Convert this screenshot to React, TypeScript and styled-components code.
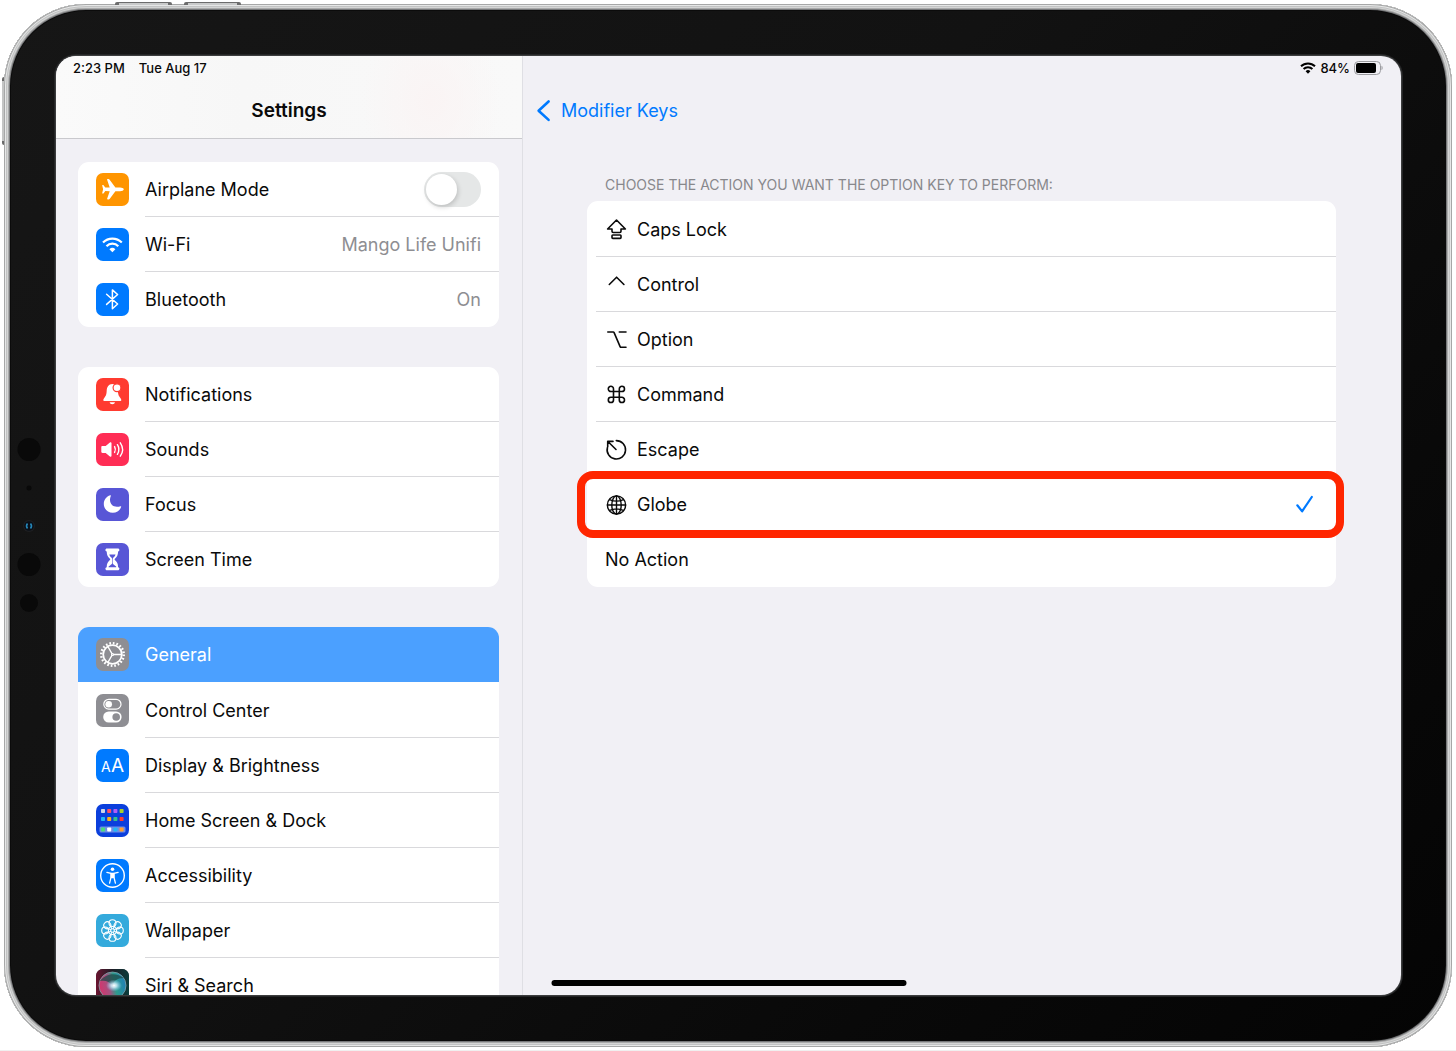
import React, { useState } from "react";
import styled, { createGlobalStyle, css } from "styled-components";

const color = {
  blue: "#007aff",
  label: "#0a0a0a",
  secondary: "#8e8e92",
  separator: "#d9d9dc",
  grouped: "#f1f0f5",
  card: "#ffffff",
  selected: "#4ba0ff",
  callout: "#ff2600",
};

const GlobalStyle = createGlobalStyle`
  *, *::before, *::after { box-sizing: border-box; }
  body {
    margin: 0;
    background: #fff;
    color: ${color.label};
    font-family: Inter, "Liberation Sans", sans-serif;
    font-size: 18px;
    line-height: 24px;
    overflow: hidden;
  }
`;

/* ---------- Device ---------- */

const Stage = styled.div`
  height: 100vh;
  min-height: 480px;
  padding: 4px;
  display: flex;
  border-bottom: 1px solid #f0f0f0;
`;

const Device = styled.div`
  position: relative;
  flex: 1;
  display: flex;
  margin-bottom: -1px;
  padding: 52px 51px 52px 52px;
  border-radius: 82px;
  background: linear-gradient(135deg, #161616 0%, #121212 40%, #090909 75%, #040404 100%);
  box-shadow:
    inset 0 0 0 1px #a6a7a7,
    inset 0 0 0 2px #e6e7e7,
    inset 0 0 0 3px #c2c3c3,
    inset 0 0 0 4px #d3d4d4,
    inset 0 0 0 5px #a9aaaa,
    inset 0 0 0 6px #77787a,
    inset 0 0 0 7px #0b0b0b;
`;

const TopButton = styled.span<{ $left: number }>`
  position: absolute;
  top: -2px;
  left: ${(p) => p.$left}px;
  width: 57px;
  height: 3px;
  border: solid #6c6c6c;
  border-width: 1px 4px 0;
  border-radius: 2px 2px 0 0;
  background: #c9caca;
`;

const SideButton = styled.span`
  position: absolute;
  left: -2px;
  top: 73px;
  width: 2px;
  height: 68px;
  border: solid #6a6a6a;
  border-width: 4px 0;
  border-radius: 2px 0 0 2px;
  background: #c4c5c5;
`;

const Sensors = styled.svg`
  position: absolute;
  left: 12px;
  top: 50%;
  width: 26px;
  height: 180px;
  transform: translateY(-50%);
`;

const Screen = styled.div`
  position: relative;
  flex: 1;
  min-width: 0;
  display: flex;
  overflow: hidden;
  border-radius: 20px;
  background: ${color.grouped};
  box-shadow: 0 0 0 1px #3c3d3e, 0 0 0 2px #242526;
`;

const HomeIndicator = styled.span`
  position: absolute;
  left: 50%;
  bottom: 9px;
  width: 355px;
  height: 6px;
  border-radius: 3px;
  background: #000;
  transform: translateX(-50%);
`;

/* ---------- Bars ---------- */

const StatusBar = styled.div<{ $end?: boolean }>`
  display: flex;
  align-items: center;
  justify-content: ${(p) => (p.$end ? "flex-end" : "flex-start")};
  gap: ${(p) => (p.$end ? 4 : 14)}px;
  height: 24px;
  padding: 0 18px 0 17px;
  font-size: 13px;
  line-height: 16px;
  font-weight: 500;
`;

const NavBar = styled.div<{ $center?: boolean }>`
  display: flex;
  align-items: center;
  justify-content: ${(p) => (p.$center ? "center" : "flex-start")};
  height: 59px;
  padding: 2px 13px 0;
`;

const Title = styled.h1`
  margin: 0;
  font-size: 19px;
  line-height: 24px;
  font-weight: 600;
`;

const BackLink = styled.a`
  display: flex;
  align-items: center;
  gap: 10px;
  color: ${color.blue};
  text-decoration: none;
`;

/* ---------- Columns ---------- */

const Sidebar = styled.nav`
  flex: 0 0 467px;
  display: flex;
  flex-direction: column;
  min-height: 0;
  border-right: 1px solid #dfdfe4;
`;

const SidebarHeader = styled.header`
  flex: none;
  height: 83px;
  border-bottom: 1px solid #c9c9cd;
  background:
    radial-gradient(ellipse 70px 90px at 375px 45px, #faf4f4 0, rgba(250, 244, 244, 0) 100%),
    linear-gradient(90deg, #fafafa, #f7f7f7 40%, #f9f9f9);
`;

const SidebarScroll = styled.div`
  flex: 1;
  min-height: 0;
  display: flex;
  flex-direction: column;
  gap: 40px;
  padding: 23px 23px 0 22px;
  overflow-y: auto;
  scrollbar-width: none;
`;

const Detail = styled.main`
  flex: 1;
  min-width: 0;
  display: flex;
  flex-direction: column;
`;

const DetailBody = styled.form`
  padding: 36px 65px 0 64px;
`;

/* ---------- Sidebar rows ---------- */

const Group = styled.ul`
  flex: none;
  margin: 0;
  padding: 0;
  list-style: none;
  border-radius: 11px;
  overflow: hidden;
  background: ${color.card};
`;

const rowStyle = css`
  display: flex;
  align-items: center;
  gap: 16px;
  height: 55px;
  padding-left: 18px;
  color: inherit;
  text-decoration: none;
`;

const RowLink = styled.a<{ $selected?: boolean }>`
  ${rowStyle}
  ${(p) => p.$selected && `margin-bottom: 1px; background: ${color.selected}; color: #fff;`}
`;

const RowLabel = styled.label`
  ${rowStyle}
`;

const RowContent = styled.span<{ $line: boolean }>`
  flex: 1;
  display: flex;
  align-items: center;
  justify-content: space-between;
  height: 55px;
  padding-right: 18px;
  border-bottom: 1px solid ${(p) => (p.$line ? color.separator : "transparent")};
`;

const RowName = styled.span`
  padding-top: 2px;
`;

const Value = styled.span`
  padding-top: 2px;
  color: ${color.secondary};
`;

const Tile = styled.svg`
  flex: none;
  width: 33px;
  height: 33px;
  border-radius: 7px;
`;

const Switch = styled.input`
  appearance: none;
  position: relative;
  margin: 0;
  width: 57px;
  height: 35px;
  border-radius: 18px;
  background: #e5e7e7;
  &:checked { background: #34c759; }
  &::before {
    content: "";
    position: absolute;
    top: 2px;
    left: 2px;
    width: 31px;
    height: 31px;
    border-radius: 50%;
    background: #fff;
    box-shadow: 1px 2px 5px rgba(0, 0, 0, 0.18);
  }
  &:checked::before { left: 24px; }
`;

/* ---------- Option list ---------- */

const Options = styled.fieldset`
  margin: 0;
  padding: 0;
  border: 0;
  min-width: 0;
`;

const Legend = styled.legend`
  padding: 0 0 6px 18px;
  color: #88888c;
  font-size: 14px;
  line-height: 20px;
`;

const OptionCard = styled.div`
  padding-top: 1px;
  border-radius: 11px;
  background: ${color.card};
`;

const OptionRow = styled.label<{ $highlight: boolean }>`
  position: relative;
  display: flex;
  height: 55px;
  padding-left: 9px;
  ${(p) =>
    p.$highlight &&
    css`
      &::after {
        content: "";
        position: absolute;
        inset: -6px -8px -6px -10px;
        border: 8px solid ${color.callout};
        border-radius: 16px;
      }
    `}
`;

const OptionContent = styled.span<{ $line: boolean }>`
  flex: 1;
  display: flex;
  align-items: center;
  gap: 9px;
  padding: 0 22px 0 9px;
  border-bottom: 1px solid ${(p) => (p.$line ? color.separator : "transparent")};
`;

const OptionName = styled.span`
  flex: 1;
  padding-top: 2px;
`;

const HiddenRadio = styled.input`
  position: absolute;
  opacity: 0;
  width: 1px;
  height: 1px;
  margin: 0;
`;

const Glyph = styled.svg`
  flex: none;
  width: 23px;
  height: 23px;
  fill: none;
  stroke: #0a0a0a;
  stroke-width: 1.6;
  stroke-linecap: round;
  stroke-linejoin: round;
`;

/* ---------- Tile icons ---------- */

const tiles: Record<string, { bg: string; art: React.ReactNode }> = {
  airplane: {
    bg: "#ff9500",
    art: (
      <path
        fill="#fff"
        d="M27.8 16.3c0-1.2-2-1.9-3.7-1.9h-4.7L13.8 6.9c-.4-.6-.8-.8-1.3-.8h-.8c-.5 0-.7.4-.5.9l2.5 7.4-4.4.2-1.6-2.2c-.2-.3-.4-.4-.7-.4h-.4c-.4 0-.5.3-.4.6l.9 3.7-.9 3.7c-.1.3 0 .6.4.6H7c.3 0 .5-.1.7-.4l1.6-2.2 4.4.2-2.5 7.4c-.2.5 0 .9.5.9h.8c.5 0 .9-.2 1.3-.8l5.6-7.5h4.7c1.7 0 3.7-.7 3.7-1.9z"
      />
    ),
  },
  wifi: {
    bg: color.blue,
    art: (
      <g fill="none" stroke="#fff" strokeWidth="2.2">
        <path d="M7 14.6a13.2 13.2 0 0 1 18.8 0" />
        <path d="M10.5 18.2a8.2 8.2 0 0 1 11.8 0" />
        <path d="M13.4 21.2a4.3 4.3 0 0 1 6 0l-3 3z" fill="#fff" stroke="none" />
      </g>
    ),
  },
  bluetooth: {
    bg: color.blue,
    art: (
      <path
        d="M10.6 11.2 21.6 21l-5.2 4.7V6.9l5.2 4.6-11 9.9"
        fill="none"
        stroke="#fff"
        strokeWidth="1.5"
        strokeLinejoin="round"
        strokeLinecap="round"
      />
    ),
  },
  bell: {
    bg: "#ff3b30",
    art: (
      <>
        <path
          fill="#fff"
          d="M16.3 6c-3.7 0-5.4 3-5.6 6.6-.2 4.2-.8 5.3-2.3 7.2-.7.8-1.1 1.5-1.1 2.1 0 .7.5 1.1 1.3 1.1h15.400c.8 0 1.3-.4 1.3-1.1 0-.6-.4-1.3-1.1-2.1-1.5-1.9-2.1-3-2.3-7.2C21.7 9 20 6 16.300 6z"
        />
        <path fill="#fff" d="M13.6 24.2h5.4c-.3 1.2-1.3 2-2.7 2s-2.4-.8-2.7-2z" />
        <circle cx="21" cy="9.7" r="3.9" fill="#fff" stroke="#ff3b30" strokeWidth="1.2" />
      </>
    ),
  },
  sounds: {
    bg: "#ff2d55",
    art: (
      <>
        <path
          fill="#fff"
          d="M6.5 13h3.2l4.2-3.5c.8-.6 1.6-.3 1.6.7v12.6c0 1-.8 1.3-1.6.7L9.700 20H6.500c-.8 0-1.2-.5-1.2-1.2v-4.600c0-.7.4-1.2 1.2-1.2z"
        />
        <g fill="none" stroke="#fff" strokeWidth="1.4" strokeLinecap="round">
          <path d="M18.6 13.6c1 1.8 1 4 0 5.8" />
          <path d="M21.4 11.7c1.9 3 1.900 6.600 0 9.600" />
          <path d="M24.3 9.8c2.9 4.2 2.9 9.200 0 13.400" />
        </g>
      </>
    ),
  },
  moon: {
    bg: "#5856d6",
    art: (
      <path
        fill="#fff"
        d="M14.2 7.3c.4-.2.8.1.6.6-.6 1.3-.8 2.5-.8 3.9 0 4.2 2.7 7 7 7 1.3 0 2.5-.2 3.5-.6.5-.2.8.1.7.6-1.1 3.5-4.4 6-8.4 6-5 0-9-3.9-9-8.900 0-3.900 2.600-7.300 6.400-8.600z"
      />
    ),
  },
  hourglass: {
    bg: "#5856d6",
    art: (
      <>
        <path
          fill="#fff"
          d="M11 5.600h10.800c1 0 1.600.6 1.600 1.500 0 .8-.5 1.300-1.300 1.500-.1 3.500-1 5.300-3.200 7.200-.5.4-.5.900 0 1.300 2.200 1.900 3.100 3.700 3.200 7.200.8.200 1.300.7 1.300 1.500 0 .900-.6 1.500-1.600 1.500H11c-1 0-1.600-.6-1.600-1.500 0-.8.500-1.300 1.300-1.500.1-3.500 1-5.300 3.200-7.200.5-.4.500-.9 0-1.300-2.200-1.900-3.100-3.700-3.200-7.200-.8-.2-1.300-.7-1.300-1.500 0-.9.600-1.500 1.600-1.500z"
        />
        <path
          fill="#5856d6"
          d="M13.300 11.400h6.200c-.4 1.400-1.100 2.300-2.100 3.100-.5.4-.7.900-.7 1.500v4c0 .6.200.9.600 1.200l2.800 2.300c.3.300.2.700-.2.700h-7c-.4 0-.5-.4-.2-.7l2.800-2.300c.4-.3.600-.6.600-1.200v-4c0-.6-.2-1.100-.7-1.500-1-.8-1.700-1.700-2.100-3.100z"
        />
      </>
    ),
  },
  gear: {
    bg: "#8e8e93",
    art: (
      <g fill="none" stroke="#fff">
        <circle cx="16.5" cy="16.5" r="11.3" strokeWidth="2.400" strokeDasharray="1.700 1.850" />
        <circle cx="16.5" cy="16.5" r="9.300" strokeWidth="1.800" />
        <path strokeWidth="1.300" d="M17.300 16.500h8.200M16.100 15.800l-4.200-7.200M16.100 17.200l-4.200 7.200" />
        <circle cx="16.5" cy="16.5" r="1" strokeWidth="1.200" />
      </g>
    ),
  },
  toggles: {
    bg: "#8e8e93",
    art: (
      <>
        <rect x="7.8" y="5.3" width="17.2" height="9.8" rx="4.9" fill="none" stroke="#fff" strokeWidth="1.2" />
        <circle cx="12.7" cy="10.2" r="3.3" fill="#fff" />
        <rect x="7.2" y="17.5" width="18.4" height="11" rx="5.5" fill="#fff" />
        <circle cx="20.2" cy="23" r="3.8" fill="#8e8e93" />
      </>
    ),
  },
  text: {
    bg: color.blue,
    art: (
      <g fill="#fff" fontFamily="Inter, sans-serif">
        <text x="5" y="23" fontSize="14">A</text>
        <text x="15" y="23" fontSize="19">A</text>
      </g>
    ),
  },
  home: {
    bg: "#0b3fdc",
    art: (
      <>
        <rect x="3.5" y="22.5" width="26" height="6" rx="1.5" fill="#6f8de8" />
        {[
          ["#cfd6e6", "#ff4f64", "#b35cf5", "#a8d12b"],
          ["#22b8f5", "#ffb017", "#34c28a", "#ff3b30"],
          ["#4cd980", "#ffffff", "#22b8f5", "#ff9f2e"],
        ].map((row, r) =>
          row.map((fill, c) => (
            <rect key={`${r}-${c}`} x={5 + c * 6.2} y={[5, 13, 23.5][r]} width="4" height="4" rx="0.8" fill={fill} />
          )),
        )}
      </>
    ),
  },
  accessibility: {
    bg: color.blue,
    art: (
      <>
        <circle cx="16.5" cy="16.5" r="11.8" fill="none" stroke="#fff" strokeWidth="1.4" />
        <circle cx="16.5" cy="10.2" r="1.8" fill="#fff" />
        <path
          d="M10.900 13.400 15 14.300v4L13.600 24.200M22.100 13.400 18 14.300v4L19.400 24.200"
          fill="none"
          stroke="#fff"
          strokeWidth="1.3"
          strokeLinecap="round"
          strokeLinejoin="round"
        />
        <path d="M14.600 13.700h3.800v4.600l-.8 1h-2.200l-.8-1z" fill="#fff" />
      </>
    ),
  },
  wallpaper: {
    bg: "#34aadc",
    art: (
      <g fill="none" stroke="#fff" strokeWidth="1.1">
        {[0, 45, 90, 135, 180, 225, 270, 315].map((a) => (
          <ellipse key={a} cx="16.5" cy="9.100" rx="3.500" ry="3.400" transform={`rotate(${a} 16.5 16.5)`} />
        ))}
        {[22.5, 67.5, 112.5, 157.5, 202.5, 247.5, 292.5, 337.5].map((a) => (
          <path key={a} d="M16.5 14.700v-3.200" transform={`rotate(${a} 16.5 16.5)`} />
        ))}
        <circle cx="16.5" cy="16.5" r="1.800" />
      </g>
    ),
  },
  siri: {
    bg: "#1c1524",
    art: (
      <>
        <defs>
          <linearGradient id="siriBack" x1="0" x2="1">
            <stop offset="0" stopColor="#6b1531" />
            <stop offset="0.5" stopColor="#1d1d26" />
            <stop offset="1" stopColor="#0c3d3c" />
          </linearGradient>
          <linearGradient id="siriOrb" x1="0" y1="0.6" x2="1" y2="0.4">
            <stop offset="0" stopColor="#d6336c" />
            <stop offset="0.35" stopColor="#a8507f" />
            <stop offset="0.6" stopColor="#2d9c8c" />
            <stop offset="1" stopColor="#1f7fb8" />
          </linearGradient>
          <radialGradient id="siriGlow">
            <stop offset="0" stopColor="#fff" />
            <stop offset="0.35" stopColor="#d9f1ff" stopOpacity="0.8" />
            <stop offset="1" stopColor="#8fd0ff" stopOpacity="0" />
          </radialGradient>
        </defs>
        <rect width="33" height="33" fill="url(#siriBack)" />
        <circle cx="16.5" cy="16.5" r="13.5" fill="url(#siriOrb)" stroke="#7fa3a8" strokeWidth="0.8" />
        <path d="M4 12C10 4 20 3 28 9 21 9 17 12 17 17 13 12 9 11 4 12z" fill="#1d4a48" opacity="0.75" />
        <ellipse cx="18" cy="16.5" rx="8" ry="6" fill="url(#siriGlow)" />
      </>
    ),
  },
};

function TileIcon({ name }: { name: string }) {
  const { bg, art } = tiles[name];
  return (
    <Tile viewBox="0 0 33 33" aria-hidden="true">
      <rect width="33" height="33" fill={bg} />
      {art}
    </Tile>
  );
}

/* ---------- Key glyphs ---------- */

const glyphs: Record<string, React.ReactNode> = {
  caps: (
    <>
      <path d="M11.500 2 2.600 11h4.400v2.300c0 .8.400 1.200 1.200 1.200h6.600c.8 0 1.200-.4 1.200-1.200V11h4.400z" />
      <rect x="7" y="17" width="9" height="3.400" rx="0.8" />
    </>
  ),
  control: <path d="m4.300 11.500 7.300-7.300 7.300 7.300" />,
  option: <path d="M2.800 4h5.400c.5 0 .7.200.9.600l6 14c.2.500.5.700 1 .7h4.900M14.300 4H21" />,
  command: (
    <path d="M8.500 8.500h5.800v5.800H8.500zM8.500 8.500H6a2.600 2.600 0 1 1 2.500-2.600zM14.300 8.500V5.900a2.600 2.600 0 1 1 2.600 2.600zM14.300 14.300h2.600a2.600 2.600 0 1 1-2.600 2.600zM8.500 14.300v2.600a2.600 2.600 0 1 1-2.600-2.600z" />
  ),
  escape: (
    <>
      <path d="M11.300 2.600a9.200 9.200 0 1 1-8.900 7" />
      <path d="M11 11.500 3.400 4M2.700 8.700V3.400H8" />
    </>
  ),
  globe: (
    <g strokeWidth="1.4">
      <circle cx="11.5" cy="12" r="9.1" />
      <ellipse cx="11.5" cy="12" rx="4.7" ry="9.1" />
      <path d="M11.500 2.900v18.200M2.400 12h18.200M4.600 6.600c4.400 2 9.400 2 13.800 0M4.600 17.400c4.400-2 9.400-2 13.800 0" />
    </g>
  ),
};

/* ---------- Data ---------- */

type Item = { label: string; icon: string; value?: string; toggle?: boolean };

const groups: Item[][] = [
  [
    { label: "Airplane Mode", icon: "airplane", toggle: true },
    { label: "Wi-Fi", icon: "wifi", value: "Mango Life Unifi" },
    { label: "Bluetooth", icon: "bluetooth", value: "On" },
  ],
  [
    { label: "Notifications", icon: "bell" },
    { label: "Sounds", icon: "sounds" },
    { label: "Focus", icon: "moon" },
    { label: "Screen Time", icon: "hourglass" },
  ],
  [
    { label: "General", icon: "gear" },
    { label: "Control Center", icon: "toggles" },
    { label: "Display & Brightness", icon: "text" },
    { label: "Home Screen & Dock", icon: "home" },
    { label: "Accessibility", icon: "accessibility" },
    { label: "Wallpaper", icon: "wallpaper" },
    { label: "Siri & Search", icon: "siri" },
  ],
];

const actions = [
  { label: "Caps Lock", glyph: "caps" },
  { label: "Control", glyph: "control" },
  { label: "Option", glyph: "option" },
  { label: "Command", glyph: "command" },
  { label: "Escape", glyph: "escape" },
  { label: "Globe", glyph: "globe" },
  { label: "No Action" },
];

function SettingsRow({ item, last }: { item: Item; last: boolean }) {
  const selected = item.label === "General";
  if (item.toggle) {
    return (
      <li>
        <RowLabel>
          <TileIcon name={item.icon} />
          <RowContent $line={!last}>
            <RowName>{item.label}</RowName>
            <Switch type="checkbox" role="switch" />
          </RowContent>
        </RowLabel>
      </li>
    );
  }
  return (
    <li>
      <RowLink href="#" $selected={selected} aria-current={selected ? "page" : undefined}>
        <TileIcon name={item.icon} />
        <RowContent $line={!last && !selected}>
          <RowName>{item.label}</RowName>
          {item.value && <Value>{item.value}</Value>}
        </RowContent>
      </RowLink>
    </li>
  );
}

export default function App() {
  const [action, setAction] = useState("Globe");

  return (
    <>
      <GlobalStyle />
      <Stage>
        <Device>
          <TopButton $left={111} />
          <TopButton $left={180} />
          <SideButton />
          <Sensors viewBox="0 0 26 180" aria-hidden="true">
            <circle cx="13" cy="13.5" r="11.5" fill="#090909" />
            <circle cx="13" cy="52" r="2.5" fill="#090909" />
            <circle cx="13" cy="90" r="6" fill="#1e1f21" />
            <circle cx="13" cy="90" r="4.8" fill="#0a0f18" />
            <path d="M11.5 87.5q-2 2.500 0 5M14.500 87.500q2 2.500 0 5" fill="none" stroke="#2687b8" strokeWidth="1.6" />
            <circle cx="13" cy="128.5" r="11.5" fill="#090909" />
            <circle cx="13" cy="167" r="9" fill="#090909" />
          </Sensors>

          <Screen>
            <Sidebar aria-label="Settings">
              <SidebarHeader>
                <StatusBar>
                  <span>2:23 PM</span>
                  <span>Tue Aug 17</span>
                </StatusBar>
                <NavBar $center>
                  <Title>Settings</Title>
                </NavBar>
              </SidebarHeader>
              <SidebarScroll>
                {groups.map((items, g) => (
                  <Group key={g}>
                    {items.map((item, i) => (
                      <SettingsRow key={item.label} item={item} last={i === items.length - 1} />
                    ))}
                  </Group>
                ))}
              </SidebarScroll>
            </Sidebar>

            <Detail>
              <header>
                <StatusBar $end>
                  <svg width="16" height="12" viewBox="0 0 16 12" aria-hidden="true">
                    <g fill="none" stroke="#000" strokeWidth="2">
                      <path d="M1 4.300a10 10 0 0 1 14 0" />
                      <path d="M3.600 7a6.200 6.200 0 0 1 8.800 0" />
                    </g>
                    <path d="M5.600 9.200a3.500 3.500 0 0 1 4.800 0L8 11.700z" fill="#000" />
                  </svg>
                  <span>84%</span>
                  <svg width="29" height="14" viewBox="0 0 29 14" aria-hidden="true">
                    <rect x="0.5" y="0.5" width="26" height="13" rx="4" fill="none" stroke="#9b9b9f" />
                    <rect x="2" y="2" width="20" height="10" rx="2" fill="#000" />
                    <path d="M27.500 4.800c1.500.4 1.500 4 0 4.400z" fill="#9b9b9f" />
                  </svg>
                </StatusBar>
                <NavBar>
                  <BackLink href="#">
                    <svg width="15" height="24" viewBox="0 0 15 24" aria-hidden="true">
                      <path
                        d="m12.600 2.500-10 9.200 10 9.200"
                        fill="none"
                        stroke={color.blue}
                        strokeWidth="2.6"
                        strokeLinecap="round"
                        strokeLinejoin="round"
                      />
                    </svg>
                    Modifier Keys
                  </BackLink>
                </NavBar>
              </header>
              <DetailBody>
                <Options>
                  <Legend>CHOOSE THE ACTION YOU WANT THE OPTION KEY TO PERFORM:</Legend>
                  <OptionCard>
                    {actions.map(({ label, glyph }, i) => (
                      <OptionRow key={label} $highlight={label === "Globe"}>
                        <HiddenRadio
                          type="radio"
                          name="action"
                          checked={action === label}
                          onChange={() => setAction(label)}
                        />
                        <OptionContent $line={i < actions.length - 1}>
                          {glyph && (
                            <Glyph viewBox="0 0 23 23" aria-hidden="true">
                              {glyphs[glyph]}
                            </Glyph>
                          )}
                          <OptionName>{label}</OptionName>
                          {action === label && (
                            <svg width="19" height="20" viewBox="0 0 19 20" aria-hidden="true">
                              <path
                                d="m2.300 11.300 4.800 6L16.800 3"
                                fill="none"
                                stroke={color.blue}
                                strokeWidth="2.2"
                                strokeLinecap="round"
                                strokeLinejoin="round"
                              />
                            </svg>
                          )}
                        </OptionContent>
                      </OptionRow>
                    ))}
                  </OptionCard>
                </Options>
              </DetailBody>
            </Detail>
            <HomeIndicator />
          </Screen>
        </Device>
      </Stage>
    </>
  );
}
